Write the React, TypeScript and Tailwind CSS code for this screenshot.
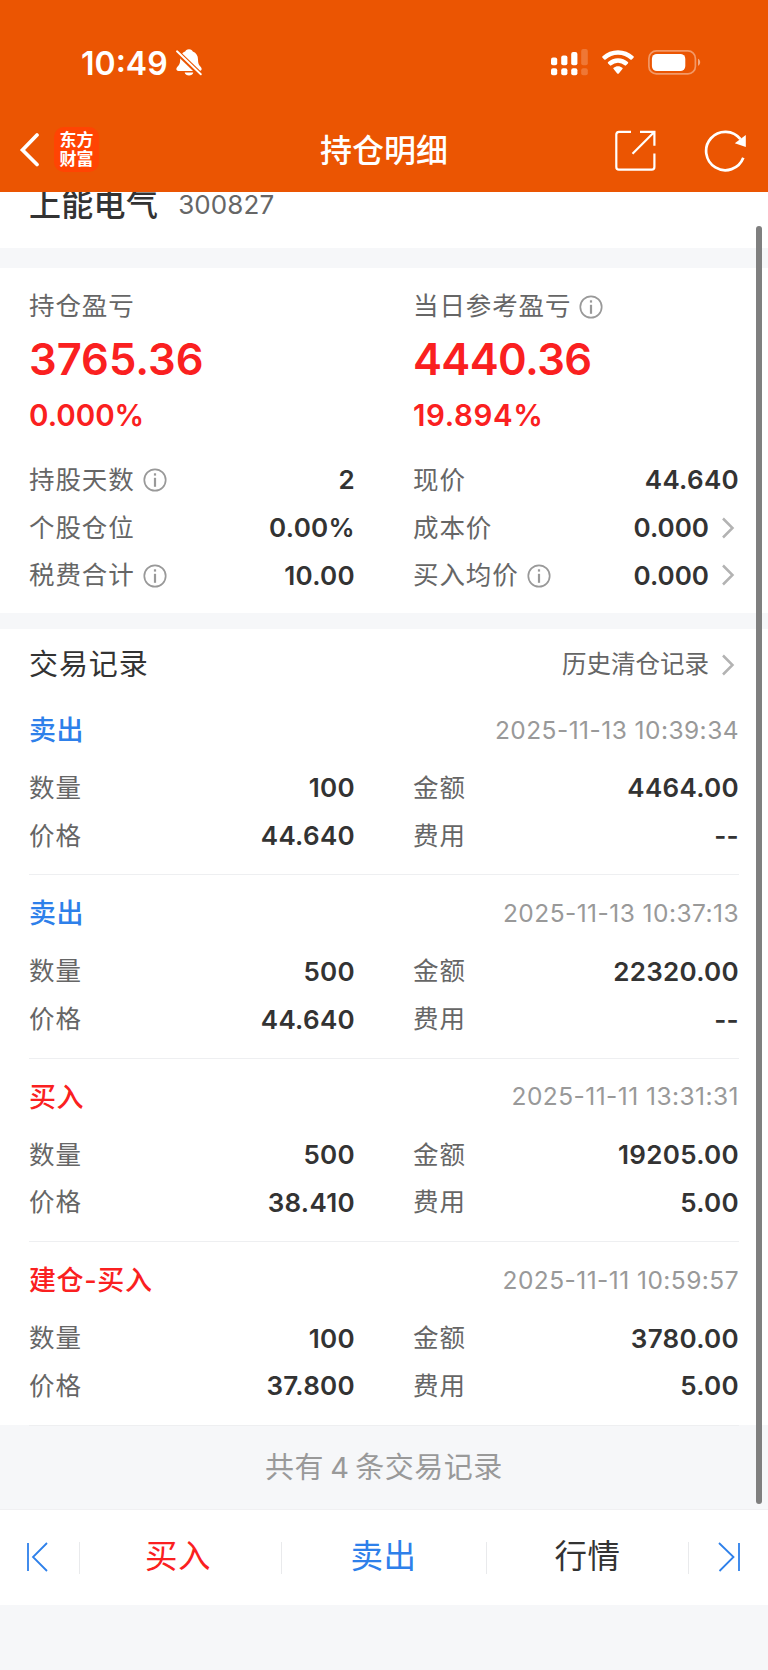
import React from 'react';
import { clsx } from 'clsx';

interface StatItem {
    label: string;
    value: string;
    info?: boolean;
    link?: boolean;
}

interface TradeRecord {
    type: string;
    side: 'buy' | 'sell';
    time: string;
    amount: string;
    price: string;
    total: string;
    fee: string;
}

const STATS: StatItem[] = [
    { label: '持股天数', value: '2', info: true },
    { label: '现价', value: '44.640' },
    { label: '个股仓位', value: '0.00%' },
    { label: '成本价', value: '0.000', link: true },
    { label: '税费合计', value: '10.00', info: true },
    { label: '买入均价', value: '0.000', info: true, link: true },
];

const RECORDS: TradeRecord[] = [
    { type: '卖出', side: 'sell', time: '2025-11-13 10:39:34', amount: '100', price: '44.640', total: '4464.00', fee: '--' },
    { type: '卖出', side: 'sell', time: '2025-11-13 10:37:13', amount: '500', price: '44.640', total: '22320.00', fee: '--' },
    { type: '买入', side: 'buy', time: '2025-11-11 13:31:31', amount: '500', price: '38.410', total: '19205.00', fee: '5.00' },
    { type: '建仓-买入', side: 'buy', time: '2025-11-11 10:59:57', amount: '100', price: '37.800', total: '3780.00', fee: '5.00' },
];

const InfoIcon = () => (
    <svg className="ml-2 mt-px size-6 shrink-0" viewBox="0 0 24 24" fill="none" stroke="#999" strokeWidth="1.7">
        <circle cx="12" cy="12" r="10.7" />
        <path d="M12 9.8v9" strokeWidth="2.2" />
        <path d="M12 5.3v2.3" strokeWidth="2.2" />
    </svg>
);

const ChevronIcon = () => (
    <svg className="ml-3 mr-1 h-6 w-[14px] shrink-0" viewBox="0 0 14 24" fill="none" stroke="#b3b3b3" strokeWidth="2.5">
        <path d="M2 2.500l9.500 9.500L2 21.500" />
    </svg>
);

const StatusBar = () => (
    <div className="flex h-[108px] items-start pl-[81px] pr-[67px] pt-12 text-white">
        <span className="text-[32px] font-semibold leading-[31px]">10:49</span>
        <svg className="ml-[7px] h-7 w-[27px]" viewBox="0 0 27 28" fill="currentColor">
            <path d="M14 1.300c-2.200 0-3.400 1-3.800 2.300C6.600 4.900 5.200 8 5.200 11.500c0 4-1 5.500-3 7.500C1 20.300.800 23 3.500 23H24.500c2.700 0 2.500-2.700 1.300-4-2-2-2.800-3.500-2.800-7.500 0-3.500-1.600-6.600-5.200-7.900-.4-1.300-1.600-2.300-3.800-2.300z" />
            <path d="M9.700 24.600h8.600c-.6 3.900-8 3.900-8.600 0z" />
            <path d="M0 2L28 29" stroke="#eb5502" strokeWidth="5.200" />
            <path d="M2 3.300L25.800 26.300" stroke="currentColor" strokeWidth="1.900" strokeLinecap="round" />
        </svg>
        <svg className="ml-auto h-7 w-[38px]" viewBox="0 0 38 28" fill="currentColor">
            <rect x="1" y="9.500" width="6.200" height="7.800" rx="2" />
            <rect x="11.200" y="7.500" width="6.200" height="9.800" rx="2" />
            <rect x="21.200" y="4" width="6.200" height="13.300" rx="2" />
            <rect x="1" y="20.300" width="6.200" height="7" rx="2" />
            <rect x="11.200" y="20.300" width="6.200" height="7" rx="2" />
            <rect x="21.200" y="20.300" width="6.200" height="7" rx="2" />
            <g opacity="0.2">
                <rect x="31.200" y="1" width="6.600" height="16.300" rx="2" />
                <rect x="31.200" y="20.300" width="6.600" height="7" rx="2" />
            </g>
        </svg>
        <svg className="ml-[14px] h-7 w-8" viewBox="0 0 32 28" fill="currentColor">
            <path d="M16 2.200c6 0 11.300 2.200 15.500 6.100.5.500.5 1 0 1.500l-1.700 1.700c-.5.500-1 .4-1.500 0A18 18 0 0 0 16 6.700 18 18 0 0 0 3.700 11.500c-.5.400-1 .5-1.500 0L.5 9.800c-.5-.5-.5-1 0-1.500C4.700 4.400 10 2.200 16 2.200z" />
            <path d="M16 10.200c3.900 0 7.300 1.500 9.900 3.800.5.500.5 1 0 1.500l-1.800 1.800c-.5.500-1 .4-1.500 0A10 10 0 0 0 16 14.800a10 10 0 0 0-6.600 2.500c-.5.400-1 .5-1.500 0l-1.800-1.800c-.5-.5-.5-1 0-1.500 2.600-2.300 6-3.800 9.900-3.800z" />
            <path d="M16 18.200c1.700 0 3.200.6 4.300 1.500.5.400.5 1 .1 1.400L17 25.300c-.6.700-1.400.7-2 0l-3.400-4.200c-.4-.4-.4-1 .1-1.400 1.100-.9 2.600-1.500 4.300-1.500z" />
        </svg>
        <svg className="ml-[14px] h-7 w-[53px]" viewBox="0 0 53 28">
            <rect x="0.900" y="2.900" width="46.500" height="23" rx="7.500" fill="none" stroke="#fff" strokeOpacity="0.400" strokeWidth="1.700" />
            <rect x="3.900" y="5.900" width="33.400" height="17.200" rx="5" fill="#fff" />
            <path d="M50 10.700c2.900 1.300 2.900 5.700 0 7z" fill="#fff" fillOpacity="0.500" />
        </svg>
    </div>
);

const NavHeader = () => (
    <div className="flex h-[84px] items-center pr-[21px] text-white">
        <svg className="ml-[19px] h-9 w-5" viewBox="0 0 20 36" fill="none" stroke="currentColor" strokeWidth="3.700" strokeLinecap="round">
            <path d="M18 3L3.500 18l14.500 14.500" />
        </svg>
        <div className="-mt-px ml-[15px] flex size-[45px] flex-col items-center justify-center rounded-[10px] bg-[#ff4403] text-[17px] font-bold leading-[19px]">
            <span>东方</span>
            <span>财富</span>
        </div>
        <h1 className="ml-[221px] w-[130px] whitespace-nowrap text-[32px] font-medium leading-9 pt-px">持仓明细</h1>
        <svg className="ml-auto size-[42px]" viewBox="0 0 42 42" fill="none" stroke="currentColor" strokeWidth="2.200">
            <path d="M17 2.800H5Q2.300 2.800 2.300 5.500V38Q2.300 40.700 5 40.700H37.700Q40.400 40.700 40.400 38V24.500" />
            <path d="M26 2.800H40.400V16.800M40 3.200L18.500 24.700" />
        </svg>
        <svg className="ml-[47px] size-[44px]" viewBox="0 0 44 44" fill="none" stroke="currentColor" strokeWidth="2.700">
            <path d="M40.300 29.800A19.200 19.200 0 1 1 37.500 11.200" />
            <path d="M42.800 7v12L31.800 15.200z" fill="currentColor" stroke="none" />
        </svg>
    </div>
);

const Field = ({ label, value, info, link }: StatItem) => (
    <div className="flex h-[47.800px] items-center">
        <span className="text-[25.500px] tracking-[0.900px] text-[#666]">{label}</span>
        {info && <InfoIcon />}
        <span className={clsx('ml-auto text-[26px] font-semibold text-[#333]', link ? 'tracking-normal' : 'tracking-[0.300px]')}>
            {value}
        </span>
        {link && <ChevronIcon />}
    </div>
);

interface ProfitProps {
    label: string;
    value: string;
    percent: string;
    info?: boolean;
    className?: string;
    percentClassName?: string;
}

const Profit = ({ label, value, percent, info, className, percentClassName }: ProfitProps) => (
    <div className="flex flex-col">
        <div className="flex h-10 items-center">
            <span className="text-[25.500px] tracking-[0.900px] text-[#666]">{label}</span>
            {info && <InfoIcon />}
        </div>
        <span className={clsx('h-[66px] text-[43.500px] font-semibold leading-[66px]', className)}>{value}</span>
        <span className={clsx('h-[46px] text-[29.500px] font-semibold leading-[46px]', percentClassName)}>{percent}</span>
    </div>
);

const RecordItem = ({ record }: { record: TradeRecord }) => (
    <div className="h-[183.400px] border-b border-[#eeeff1] pt-[15px]">
        <div className="flex h-12 items-center justify-between">
            <span
                className={clsx(
                    'text-[27px] font-medium tracking-[0.600px]',
                    record.side === 'buy' ? 'text-[#fa2020]' : 'text-[#2e80ea]'
                )}
            >
                {record.type}
            </span>
            <span className="-mt-[2px] text-[24.500px] tracking-[0.450px] text-[#999]">{record.time}</span>
        </div>
        <div className="mt-[9px] grid grid-cols-2 gap-x-[58px]">
            <Field label="数量" value={record.amount} />
            <Field label="金额" value={record.total} />
            <Field label="价格" value={record.price} />
            <Field label="费用" value={record.fee} />
        </div>
    </div>
);

const Divider = () => <div className="h-8 w-px bg-[#e9eaec]" />;

const BottomNav = () => (
    <nav className="flex h-24 items-center border-t border-[#f0f0f2] bg-white text-[32.500px] tracking-[0.500px]">
        <div className="w-[79px] pl-[25px]">
            <svg className="-mt-px h-[30px] w-6" viewBox="0 0 24 30" fill="none" stroke="#2e80ea" strokeWidth="1.800">
                <path d="M3 1v28M22 1L8 15l14 14" />
            </svg>
        </div>
        <Divider />
        <div className="w-[201px] pr-[5px] text-center text-[#fa2020]">买入</div>
        <Divider />
        <div className="w-[204px] pr-px text-center text-[#2e80ea]">卖出</div>
        <Divider />
        <div className="w-[201px] text-center text-[#333]">行情</div>
        <Divider />
        <div className="flex-1 pl-[28px]">
            <svg className="-mt-px h-[30px] w-6" viewBox="0 0 24 30" fill="none" stroke="#2e80ea" strokeWidth="1.800">
                <path d="M22 1v28M2 1L16.500 15L2.500 29" />
            </svg>
        </div>
    </nav>
);

export default function App() {
    return (
        <div className="relative h-[1670px] w-[768px] overflow-hidden bg-[#f6f7f9] font-['Inter','Noto_Sans_CJK_SC',sans-serif]">
            <header className="relative z-10 h-48 bg-[#eb5502]">
                <StatusBar />
                <NavHeader />
            </header>

            {/* stock title, partly scrolled under the header */}
            <section className="flex h-14 items-start bg-white pl-[29px]">
                <span className="-mt-[9px] text-[32px] font-medium leading-[44px] tracking-[0.300px] text-[#333]">上能电气</span>
                <span className="ml-5 text-[26px] leading-[26px] tracking-[0.100px] text-[#666]">300827</span>
            </section>

            <section className="mt-5 h-[345px] bg-white px-[29px] pt-[18px]">
                <div className="grid grid-cols-2 gap-x-[58px] text-[#fa2020]">
                    <Profit label="持仓盈亏" value="3765.36" percent="0.000%" />
                    <Profit
                        label="当日参考盈亏"
                        value="4440.36"
                        percent="19.894%"
                        info
                        className="tracking-[-0.600px]"
                        percentClassName="tracking-[0.600px]"
                    />
                </div>
                <div className="mt-[18px] grid grid-cols-2 gap-x-[58px]">
                    {STATS.map((item) => (
                        <Field key={item.label} {...item} />
                    ))}
                </div>
            </section>

            <section className="mt-4 h-[796px] bg-white px-[29px]">
                <div className="flex h-[63px] items-center pt-2">
                    <h2 className="text-[29px] tracking-[0.900px] text-[#333]">交易记录</h2>
                    <span className="-mt-px ml-auto text-[24.500px] text-[#666]">历史清仓记录</span>
                    <ChevronIcon />
                </div>
                {RECORDS.map((record) => (
                    <RecordItem key={record.time} record={record} />
                ))}
            </section>

            <div className="flex h-[84px] items-center justify-center pt-[2px] text-[29px] tracking-[0.500px] text-[#999]">
                共有<span className="mx-[6px]">4</span>条交易记录
            </div>

            <BottomNav />

            <div className="absolute right-[6px] top-[226px] h-[1278px] w-[6px] rounded-full bg-[#7f7f7f]" />
        </div>
    );
}
